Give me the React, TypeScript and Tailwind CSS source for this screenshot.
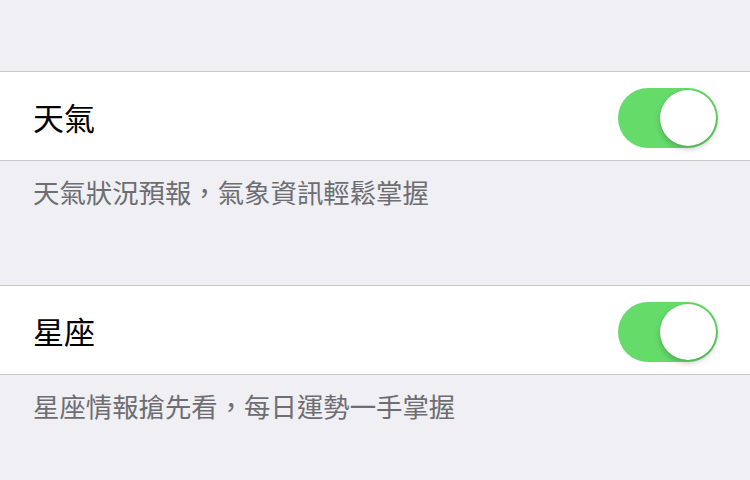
const font = {
  fontFamily: '"Noto Sans CJK TC", "Noto Sans", sans-serif',
};

function Toggle() {
  return (
    <div className="relative mt-[3px] h-[60px] w-[100px] shrink-0 rounded-full bg-[#65dc6a]">
      <div className="absolute right-[2px] top-[2px] h-[56px] w-[56px] rounded-full bg-white shadow-[0_3px_6px_rgba(0,0,0,0.22),0_0_1px_rgba(0,0,0,0.15)]" />
    </div>
  );
}

function Section({ title, footer }: { title: string; footer: string }) {
  return (
    <div>
      <div className="flex h-[90px] items-center justify-between border-y border-[#c8c7cc] bg-white pl-[33px] pr-[32px]">
        <span className="text-[31px] leading-none text-black">{title}</span>
        <Toggle />
      </div>
      <p className="pb-[77px] pl-[33px] pt-[15px] text-[26.4px] leading-[32px] text-[#6d6d72]">
        {footer}
      </p>
    </div>
  );
}

export default function App() {
  return (
    <div className="h-[480px] w-[750px] overflow-hidden bg-[#efeff4] pt-[71px]" style={font}>
      <Section title="天氣" footer="天氣狀況預報，氣象資訊輕鬆掌握" />
      <Section title="星座" footer="星座情報搶先看，每日運勢一手掌握" />
    </div>
  );
}
